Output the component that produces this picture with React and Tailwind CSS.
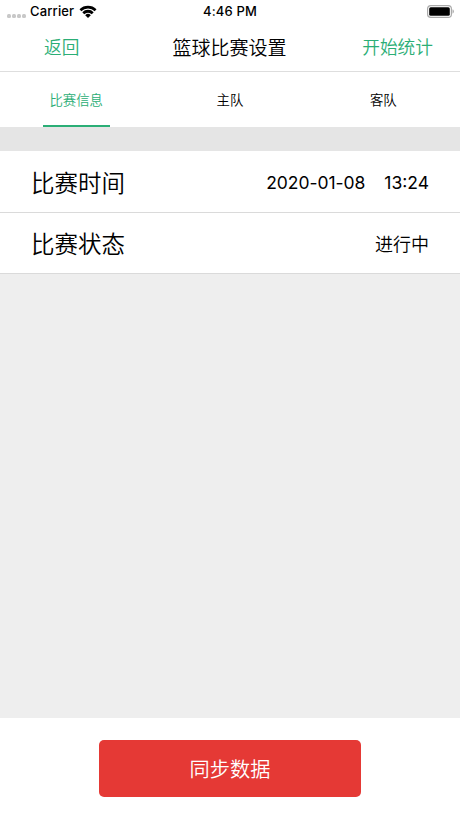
const tabs = ["比赛信息", "主队", "客队"];

const StatusBar = () => {
  return (
    <div className="grid h-[23px] grid-cols-3 items-center pr-[6px] pl-[7px] text-[13px] font-medium">
      <div className="flex items-center">
        <div className="mt-2 flex gap-px">
          <span className="size-[4px] rounded-[1.5px] bg-[#c8c8c8]" />
          <span className="size-[4px] rounded-[1.5px] bg-[#c8c8c8]" />
          <span className="size-[4px] rounded-[1.5px] bg-[#c8c8c8]" />
          <span className="size-[4px] rounded-[1.5px] bg-[#c8c8c8]" />
        </div>
        <span className="ml-[4px] tracking-[0.15px]">Carrier</span>
        <svg className="ml-[5px]" width="18" height="13" viewBox="0 0 18 13">
          <path d="M0.5 4.2a12.2 12.2 0 0 1 17 0l-1.8 2a9.5 9.5 0 0 0-13.4 0z" />
          <path d="M3.3 7.2a8.1 8.1 0 0 1 11.4 0l-1.9 2a5.4 5.4 0 0 0-7.6 0z" />
          <path d="M6.2 10.2a4 4 0 0 1 5.6 0L9 13z" />
        </svg>
      </div>
      <span className="-ml-px text-center tracking-[0.15px]">4:46 PM</span>
      <svg className="justify-self-end" width="27" height="13" viewBox="0 0 27 13">
        <rect x="0.6" y="0.6" width="23.8" height="11.8" rx="3.2" fill="none" stroke="#aaa" strokeWidth="1.2" />
        <rect x="2.2" y="2.2" width="20.6" height="8.6" rx="1.5" />
        <path d="M25.5 4.3q1.4 0.6 1.4 2.2t-1.4 2.2z" fill="#aaa" />
      </svg>
    </div>
  );
};

const App = () => {
  return (
    <div className="flex h-[818px] w-[460px] flex-col bg-[#eeeeee] font-['Inter','Noto_Sans_CJK_SC',sans-serif] text-black">
      <div className="bg-white">
        <StatusBar />
        <header className="grid h-[49px] grid-cols-3 items-center border-b border-[#dedede] pr-[27px] pl-[44px] text-[17.7px] font-[350]">
          <button className="justify-self-start pt-[3px] text-[#2bae76]">返回</button>
          <h1 className="-ml-[18px] justify-self-center pt-[5px] text-[19px] font-[350] whitespace-nowrap">
            篮球比赛设置
          </h1>
          <button className="justify-self-end pt-[3px] text-[#2bae76]">开始统计</button>
        </header>
        <nav className="grid h-[55px] grid-cols-3 text-[13.4px] font-[350]">
          {tabs.map((tab, i) => (
            <div key={tab} className="flex justify-center">
              <span
                className={
                  i === 0
                    ? "flex w-[67px] items-center justify-center border-b-2 border-[#2bae76] pt-[3px] pr-px text-[#2bae76]"
                    : "flex items-center pt-px"
                }
              >
                {tab}
              </span>
            </div>
          ))}
        </nav>
      </div>

      <div className="h-6 bg-[#e5e5e5]" />

      <div className="flex h-[62px] items-center justify-between border-b border-[#dadada] bg-white px-[31px]">
        <span className="pt-[4px] text-[23.5px] font-[350]">比赛时间</span>
        <span className="flex gap-[19px] pt-[3px] text-[17.5px]">
          <span className="tracking-[-0.05px]">2020-01-08</span>
          <span>13:24</span>
        </span>
      </div>
      <div className="flex h-[61px] items-center justify-between border-b border-[#dadada] bg-white px-[31px]">
        <span className="pt-[4px] text-[23.5px] font-[350]">比赛状态</span>
        <span className="pt-[3px] text-[18px] font-[350]">进行中</span>
      </div>

      <div className="mt-auto flex h-[100px] justify-center bg-white pt-[22px]">
        <button className="h-[57px] w-[262px] rounded-[5px] bg-[#e53935] pt-[4px] text-[20.2px] font-[350] text-white">
          同步数据
        </button>
      </div>
    </div>
  );
};

export default App;
